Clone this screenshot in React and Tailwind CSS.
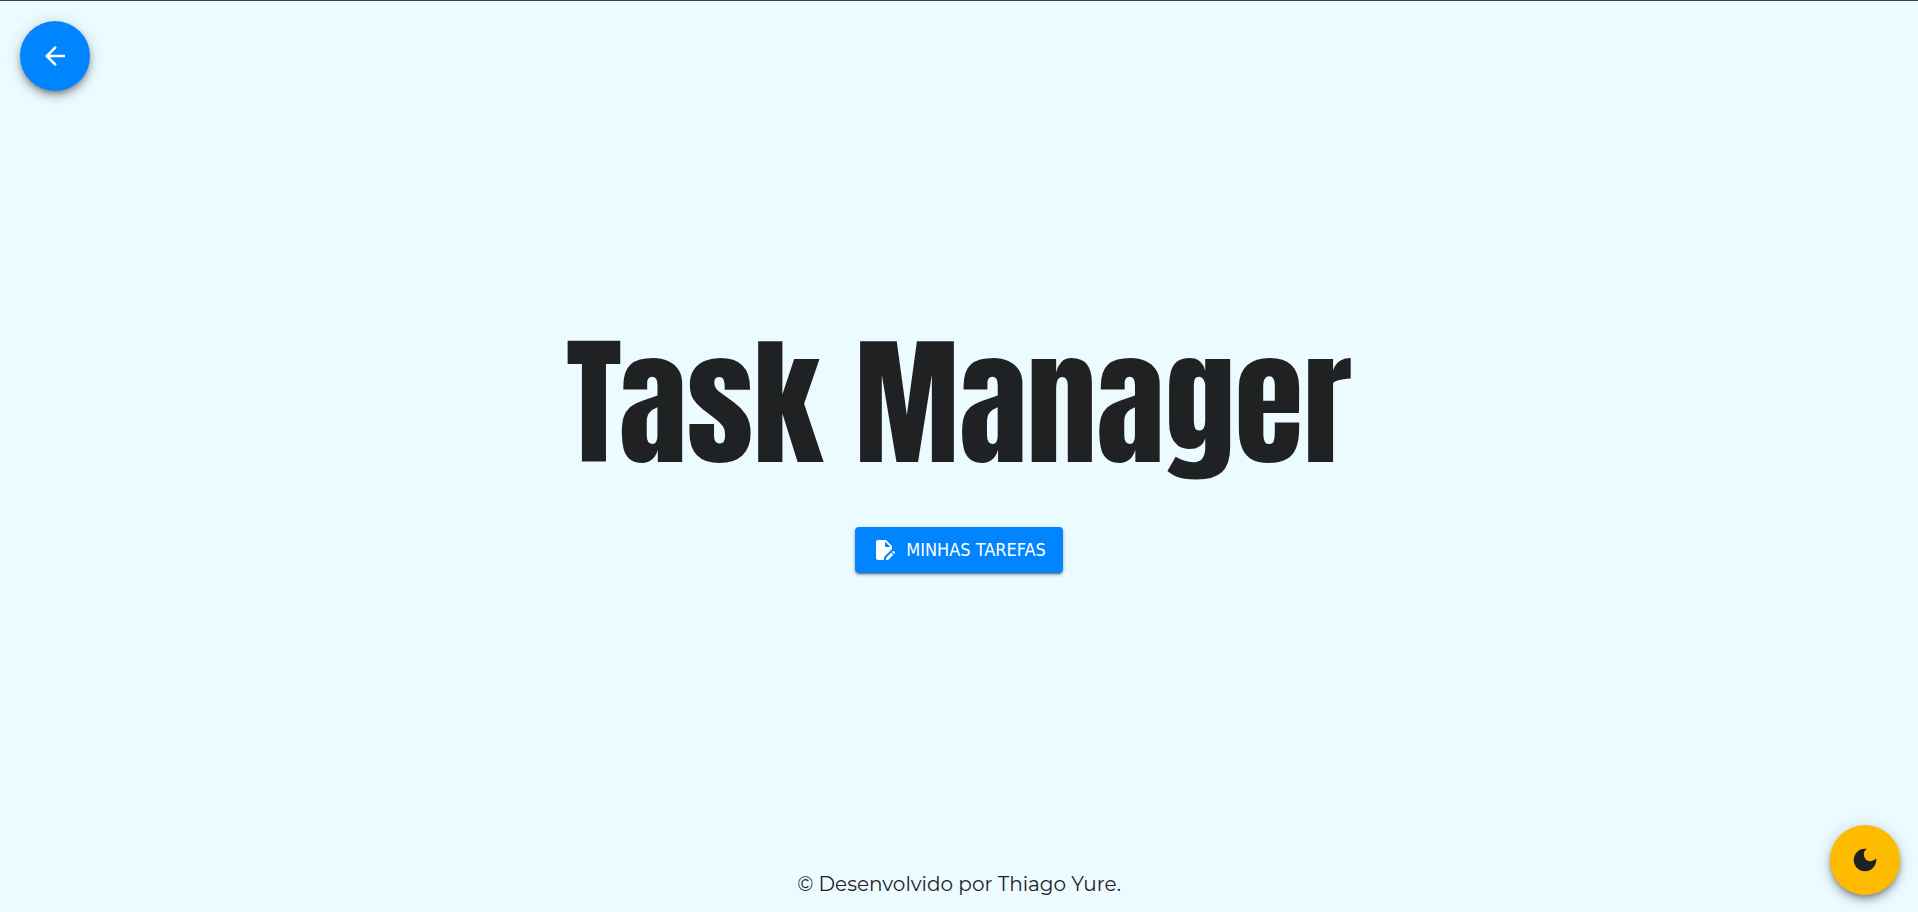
import { MdArrowBack, MdDarkMode, MdEditDocument } from "react-icons/md";

export default function App() {
  return (
    <div className="relative flex min-h-screen flex-col border-t border-[#3c4450] bg-[#ecfbff] text-[#1f2122]">
      <button
        type="button"
        aria-label="Voltar"
        className="absolute top-5 left-5 flex size-[70px] items-center justify-center rounded-full bg-[#0085ff] text-white shadow-[0_3px_5px_-1px_rgba(0,0,0,0.3),0_6px_10px_0_rgba(0,0,0,0.2),0_1px_18px_0_rgba(0,0,0,0.12)]"
      >
        <MdArrowBack className="size-[30px]" />
      </button>

      <main className="flex flex-1 flex-col items-center justify-center gap-[54px] pt-9">
        <h1 className="font-['Anton','Liberation_Sans_Narrow','Liberation_Sans',sans-serif] text-[140px] leading-none font-normal">
          Task Manager
        </h1>
        <button
          type="button"
          className="flex h-[46px] items-center gap-[10px] rounded-[4px] bg-[#0085ff] px-[17px] font-['Tahoma','DejaVu_Sans_Condensed','DejaVu_Sans',sans-serif] text-[18px] text-white shadow-[0_3px_1px_-2px_rgba(0,0,0,0.3),0_2px_3px_0_rgba(0,0,0,0.25),0_1px_5px_0_rgba(0,0,0,0.12)]"
        >
          <MdEditDocument className="size-[24px]" />
          MINHAS TAREFAS
        </button>
      </main>

      <footer className="pb-3 text-center font-['Montserrat','Inter',sans-serif] text-[20px] leading-8">
        © Desenvolvido por Thiago Yure.
      </footer>

      <button
        type="button"
        aria-label="Alternar tema"
        className="absolute right-[18px] bottom-[17px] flex size-[70px] items-center justify-center rounded-full bg-[#ffbb00] text-[#1f2122] shadow-[0_3px_5px_-1px_rgba(0,0,0,0.3),0_6px_10px_0_rgba(0,0,0,0.2),0_1px_18px_0_rgba(0,0,0,0.12)]"
      >
        <MdDarkMode className="size-[30px]" />
      </button>
    </div>
  );
}
